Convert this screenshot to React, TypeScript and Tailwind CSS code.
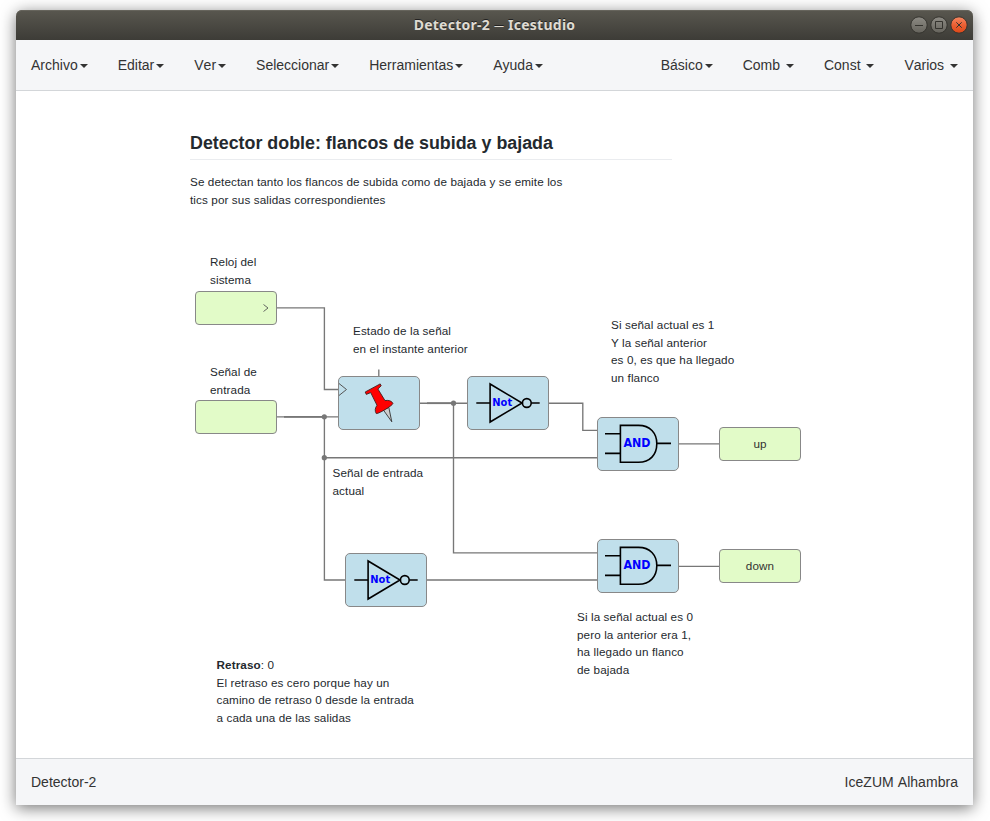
import React from "react";

const leftMenu = ["Archivo", "Editar", "Ver", "Seleccionar", "Herramientas", "Ayuda"];
const rightMenu = ["Básico", "Comb ", "Const ", "Varios "];

function Caret() {
  return (
    <span className="ml-[2px] inline-block border-x-4 border-t-4 border-x-transparent border-t-[#333] align-middle" />
  );
}

function MenuItem({ label }: { label: string }) {
  return (
    <li className="whitespace-pre px-[15px] text-sm leading-5 [font-kerning:none]">
      {label}
      <Caret />
    </li>
  );
}

function Block({ className, children }: { className: string; children?: React.ReactNode }) {
  return (
    <div className={`absolute h-[54px] w-[82px] rounded-[5px] border border-[#888] bg-[#c0dfeb] ${className}`}>
      {children}
    </div>
  );
}

function Port({ className, children }: { className: string; children?: React.ReactNode }) {
  return (
    <div
      className={`absolute flex h-[34px] w-[82px] items-center justify-center rounded-[4px] border border-[#888] bg-[#e2fbc8] text-[11.7px] tracking-[0.1px] ${className}`}
    >
      {children}
    </div>
  );
}

function Note({ className, lines }: { className: string; lines: React.ReactNode[] }) {
  return (
    <div
      className={`absolute whitespace-nowrap text-[11.7px] leading-[17.7px] tracking-[0.105px] text-[#24292e] ${className}`}
    >
      {lines.map((line, i) => (
        <div key={i}>{line}</div>
      ))}
    </div>
  );
}

function NotGate() {
  return (
    <svg className="block h-[52px] w-[80px]" viewBox="468 377 80 52" fill="none" stroke="#000" strokeWidth="1.6">
      <path d="M476.3 403H490.1M531.3 403H539.7M490.1 384V422L522 403Z" />
      <circle cx="526.8" cy="403" r="4.4" />
      <text
        x="492.3"
        y="406"
        fill="#00f"
        stroke="none"
        fontSize="11"
        fontWeight="bold"
        fontFamily="DejaVu Sans Condensed, DejaVu Sans, sans-serif"
      >
        Not
      </text>
    </svg>
  );
}

function AndGate() {
  return (
    <svg className="block h-[52px] w-[80px]" viewBox="598 418 80 52" fill="none" stroke="#000" strokeWidth="1.6">
      <path d="M605 433.7H620.4M605 453.4H620.4M657 443.4H671M620.4 425.4H638.5C650 425.4 656.8 433 656.8 443.8S650 462.3 638.5 462.3H620.4Z" />
      <text
        x="623.5"
        y="447"
        fill="#00f"
        stroke="none"
        fontSize="12.3"
        fontWeight="bold"
        fontFamily="DejaVu Sans Condensed, DejaVu Sans, sans-serif"
      >
        AND
      </text>
    </svg>
  );
}

function Register() {
  return (
    <svg className="block h-[52px] w-[80px]" viewBox="339 377 80 52" fill="none">
      <path d="M339 383.5L346.5 389.5L339 395.5" stroke="#555" strokeWidth="1" />
      <path d="M383.4 410L388.8 407.4L391.8 421.8Z" fill="#ccc" stroke="#333" strokeWidth="0.9" />
      <path
        d="M365.2 392L380.2 383.9L381.2 385.8L377.9 389L385 400.6C388 399.9 392 400.8 392.9 403.5C392.5 405.5 379.5 413.5 376.3 413.6C374.6 411 375 408 377 405.3L370.7 392.6L366.3 394.4Z"
        fill="#f00"
        stroke="#402020"
        strokeWidth="0.9"
      />
    </svg>
  );
}

function Wires() {
  return (
    <svg className="absolute inset-0 h-[667px] w-[957px]" viewBox="16 91 957 667" fill="none" stroke="#777" strokeWidth="1.35">
      <path d="M277 307.8H324.4V389.5H338" />
      <path d="M277 416.8H338M324.4 416.8V580H345" />
      <path d="M284 416.8H324" strokeWidth="1.8" />
      <path d="M324.4 457.7H597" />
      <path d="M378.8 369.5V376" />
      <path d="M420 403.2H467M453.5 403V552.8H597" />
      <path d="M427 403.2H453" strokeWidth="1.8" />
      <path d="M549 403.2H582.8V430.3H597" />
      <path d="M427 580H597M679 443.8H719M679 566.3H719" />
      <g fill="#777" stroke="none">
        <circle cx="324.3" cy="416.8" r="2.6" />
        <circle cx="324.3" cy="457.7" r="2.6" />
        <circle cx="453.5" cy="403.2" r="2.6" />
      </g>
    </svg>
  );
}

function WindowButtons() {
  return (
    <svg className="h-[20px] w-[60px]" viewBox="909 15 60 20" fill="none">
      <defs>
        <linearGradient id="grey" x1="0" y1="0" x2="0" y2="1">
          <stop offset="0" stopColor="#8d8b84" />
          <stop offset="1" stopColor="#65635c" />
        </linearGradient>
        <linearGradient id="orange" x1="0" y1="0" x2="0" y2="1">
          <stop offset="0" stopColor="#f58862" />
          <stop offset="0.5" stopColor="#ea6034" />
          <stop offset="1" stopColor="#dc4717" />
        </linearGradient>
      </defs>
      <g stroke="#34332e" strokeWidth="1">
        <circle cx="919" cy="25" r="8.2" fill="url(#grey)" />
        <circle cx="939" cy="25" r="8.2" fill="url(#grey)" />
        <circle cx="959" cy="25" r="8.2" fill="url(#orange)" />
        <path d="M915 25.5H923M935.5 21.5H942.5V28.5H935.5ZM956.3 22.3L961.7 27.7M961.7 22.3L956.3 27.7" />
      </g>
    </svg>
  );
}

export default function App() {
  return (
    <div className="h-[821px] w-[990px] overflow-hidden bg-white px-4 pt-[10px] font-['Liberation_Sans',Arial,sans-serif] text-[#333]">
      <div className="flex h-[795px] w-[957px] flex-col rounded-t-[6px] shadow-[0_3px_16px_rgba(0,0,0,0.55)]">
        <header className="grid h-[30px] shrink-0 grid-cols-[1fr_auto_1fr] items-center rounded-t-[6px] bg-linear-to-b from-[#59574f] to-[#3d3c37] shadow-[inset_0_1px_0_#66645c]">
          <span />
          <h1 className="whitespace-nowrap font-['Noto_Sans',sans-serif] text-[14px] leading-5 font-bold tracking-[0.25px] text-[#dfdbd2] [text-shadow:0_-1px_0_#222]">
            Detector-2 <span className="align-[1px] text-[10px] leading-none font-normal">—</span> Icestudio
          </h1>
          <div className="flex justify-end pr-[4px]">
            <WindowButtons />
          </div>
        </header>

        <nav className="flex h-[51px] shrink-0 items-center justify-between border-b border-[#d3d6d9] bg-[#f5f6f8]">
          <ul className="flex">
            {leftMenu.map((m) => (
              <MenuItem key={m} label={m} />
            ))}
          </ul>
          <ul className="flex">
            {rightMenu.map((m) => (
              <MenuItem key={m} label={m} />
            ))}
          </ul>
        </nav>

        <main className="relative h-[667px] shrink-0 overflow-hidden bg-white">
          <div className="absolute top-[40px] left-[174px] w-[482px] border-b border-[#eaecef] pb-[3px]">
            <h2 className="text-[17.85px] leading-[25px] font-bold whitespace-nowrap text-[#24292e]">
              Detector doble: flancos de subida y bajada
            </h2>
          </div>
          <Note
            className="top-[82px] left-[174px]"
            lines={[
              "Se detectan tanto los flancos de subida como de bajada y se emite los",
              "tics por sus salidas correspondientes",
            ]}
          />
          <Wires />
          <Note className="top-[162px] left-[194px]" lines={["Reloj del", "sistema"]} />
          <Note className="top-[272px] left-[194px]" lines={["Señal de", "entrada"]} />
          <Note className="top-[231px] left-[337px]" lines={["Estado de la señal", "en el instante anterior"]} />
          <Note className="top-[373px] left-[316.5px]" lines={["Señal de entrada", "actual"]} />
          <Note
            className="top-[225px] left-[595px]"
            lines={["Si señal actual es 1", "Y la señal anterior", "es 0, es que ha llegado", "un flanco"]}
          />
          <Note
            className="top-[517px] left-[561px]"
            lines={["Si la señal actual es 0", "pero la anterior era 1,", "ha llegado un flanco", "de bajada"]}
          />
          <Note
            className="top-[565px] left-[200.5px]"
            lines={[
              <>
                <b>Retraso</b>: 0
              </>,
              "El retraso es cero porque hay un",
              "camino de retraso 0 desde la entrada",
              "a cada una de las salidas",
            ]}
          />

          <Port className="top-[200px] left-[179px]">
            <svg className="mr-[7px] ml-auto h-2 w-[6px]" viewBox="0 0 6 8" fill="none" stroke="#555" strokeWidth="0.9">
              <path d="M0.5 0.5L5 4L0.5 7.5" />
            </svg>
          </Port>
          <Port className="top-[309px] left-[179px]" />
          <Port className="top-[336px] left-[703px]">up</Port>
          <Port className="top-[458px] left-[703px]">down</Port>

          <Block className="top-[285px] left-[322px]">
            <Register />
          </Block>
          <Block className="top-[285px] left-[451px]">
            <NotGate />
          </Block>
          <Block className="top-[462px] left-[329px]">
            <NotGate />
          </Block>
          <Block className="top-[326px] left-[581px]">
            <AndGate />
          </Block>
          <Block className="top-[448px] left-[581px]">
            <AndGate />
          </Block>
        </main>

        <footer className="flex h-[47px] shrink-0 items-center justify-between border-t border-[#d3d6d9] bg-[#f5f6f8] px-[15px] text-sm leading-5 [font-kerning:none]">
          <span>Detector-2</span>
          <span className="tracking-[0.04px]">IceZUM Alhambra</span>
        </footer>
      </div>
    </div>
  );
}
